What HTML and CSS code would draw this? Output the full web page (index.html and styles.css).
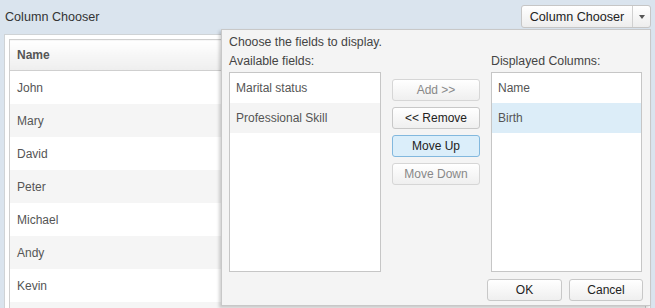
FILE: index.html
```html
<!DOCTYPE html>
<html lang="en">

<head>
  <meta charset="UTF-8" />
  <title>Column Chooser</title>
  <link rel="stylesheet" href="styles.css">
</head>

<body>

  <div class="toolbar">
    <span class="title">Column Chooser</span>
    <div class="split-btn">
      <button class="split-main">Column Chooser</button>
      <button class="split-arrow"><span class="caret"></span></button>
    </div>
  </div>

  <div class="grid-panel">
    <table class="grid">
      <thead>
        <tr><th>Name</th></tr>
      </thead>
      <tbody>
        <tr><td>John</td></tr>
        <tr><td>Mary</td></tr>
        <tr><td>David</td></tr>
        <tr><td>Peter</td></tr>
        <tr><td>Michael</td></tr>
        <tr><td>Andy</td></tr>
        <tr><td>Kevin</td></tr>
        <tr><td></td></tr>
      </tbody>
    </table>
  </div>

  <!-- Column chooser popup -->
  <div class="chooser">
    <div class="intro">Choose the fields to display.</div>
    <div class="columns">
      <div class="col col-left">
        <div class="label">Available fields:</div>
        <ul class="listbox">
          <li>Marital status</li>
          <li>Professional Skill</li>
        </ul>
      </div>
      <div class="col col-mid">
        <button class="btn" disabled>Add &gt;&gt;</button>
        <button class="btn">&lt;&lt; Remove</button>
        <button class="btn btn-active">Move Up</button>
        <button class="btn" disabled>Move Down</button>
      </div>
      <div class="col col-right">
        <div class="label">Displayed Columns:</div>
        <ul class="listbox">
          <li>Name</li>
          <li class="selected">Birth</li>
        </ul>
      </div>
    </div>
    <div class="footer">
      <button class="btn btn-ok">OK</button>
      <button class="btn btn-cancel">Cancel</button>
    </div>
  </div>

</body>

</html>
```

FILE: styles.css
```css
body {
  margin: 0;
  padding: 0;
  background: #dae4ee;
  font-family: 'Liberation Sans', Arial, sans-serif;
  font-size: 12px;
  color: #333;
  overflow: hidden;
  height: 308px;
}

.toolbar {
  display: flex;
  justify-content: space-between;
  align-items: flex-start;
  height: 34px;
  padding: 0 4px 0 5px;
}

.title {
  font-size: 12.6px;
  line-height: 34px;
  color: #333;
}

.split-btn {
  display: flex;
  margin-top: 5px;
  height: 23px;
  border: 1px solid #c6c6c6;
  border-radius: 3px;
  background: linear-gradient(#ffffff, #ededed);
  box-sizing: border-box;
}

.split-btn button {
  border: none;
  background: transparent;
  font-family: inherit;
  color: #222;
  padding: 0;
  margin: 0;
}

.split-main {
  width: 111px;
  font-size: 12.6px;
  border-right: 1px solid #d0d0d0 !important;
}

.split-arrow {
  width: 17px;
  display: flex;
  align-items: center;
  justify-content: center;
}

.caret {
  width: 0;
  height: 0;
  border-left: 3.5px solid transparent;
  border-right: 3.5px solid transparent;
  border-top: 4px solid #555;
}

.grid-panel {
  margin: 0 4px;
  padding: 4px 4px 0;
  background: #fff;
  border: 1px solid #cfd3d6;
  border-bottom: none;
  height: 274px;
  box-sizing: border-box;
  overflow: hidden;
}

.grid {
  width: 100%;
  border-collapse: collapse;
  border: 1px solid #cfcfcf;
}

.grid th {
  text-align: left;
  height: 30px;
  padding: 0 7px;
  font-weight: bold;
  color: #555;
  background: linear-gradient(#ffffff, #eeeeee);
  border-bottom: 1px solid #cfcfcf;
}

.grid td {
  height: 33px;
  padding: 0 7px;
  color: #555;
}

.grid tbody tr:nth-child(even) td {
  background: #f5f5f5;
}

.chooser {
  position: absolute;
  left: 221px;
  top: 29px;
  width: 430px;
  height: 277px;
  box-sizing: border-box;
  padding: 4px 7px;
  background: #f4f4f4;
  border: 1px solid #c8c8c8;
  box-shadow: -2px 2px 3px rgba(0, 0, 0, 0.18);
  color: #444;
}

.intro {
  font-size: 12.3px;
  line-height: 16px;
}

.columns {
  display: flex;
}

.col-left {
  width: 152px;
}

.col-right {
  width: 151px;
}

.col-mid {
  width: 88px;
  margin: 0 11px;
  padding-top: 29px;
  display: flex;
  flex-direction: column;
  gap: 6px;
}

.label {
  font-size: 12.3px;
  margin-top: 3px;
  line-height: 16px;
}

.listbox {
  list-style: none;
  margin: 3px 0 0;
  padding: 0;
  height: 200px;
  box-sizing: border-box;
  background: #fff;
  border: 1px solid #c6c6c6;
}

.listbox li {
  height: 30px;
  line-height: 30px;
  padding-left: 6px;
  color: #555;
}

.listbox li:nth-child(even) {
  background: #f4f4f4;
}

.listbox li.selected {
  background: #dcedf8;
}

.btn {
  height: 22px;
  box-sizing: border-box;
  border: 1px solid #c8c8c8;
  border-radius: 3px;
  background: linear-gradient(#ffffff, #efefef);
  font-family: inherit;
  font-size: 12px;
  color: #222;
  padding: 0;
  margin: 0;
}

.btn:disabled {
  color: #888;
  border-color: #d6d6d6;
}

.btn-active {
  background: #dbeefa;
  border-color: #82b8de;
}

.footer {
  display: flex;
  justify-content: flex-end;
  gap: 7px;
  margin-top: 7px;
}

.btn-ok {
  width: 75px;
}

.btn-cancel {
  width: 74px;
}
```
